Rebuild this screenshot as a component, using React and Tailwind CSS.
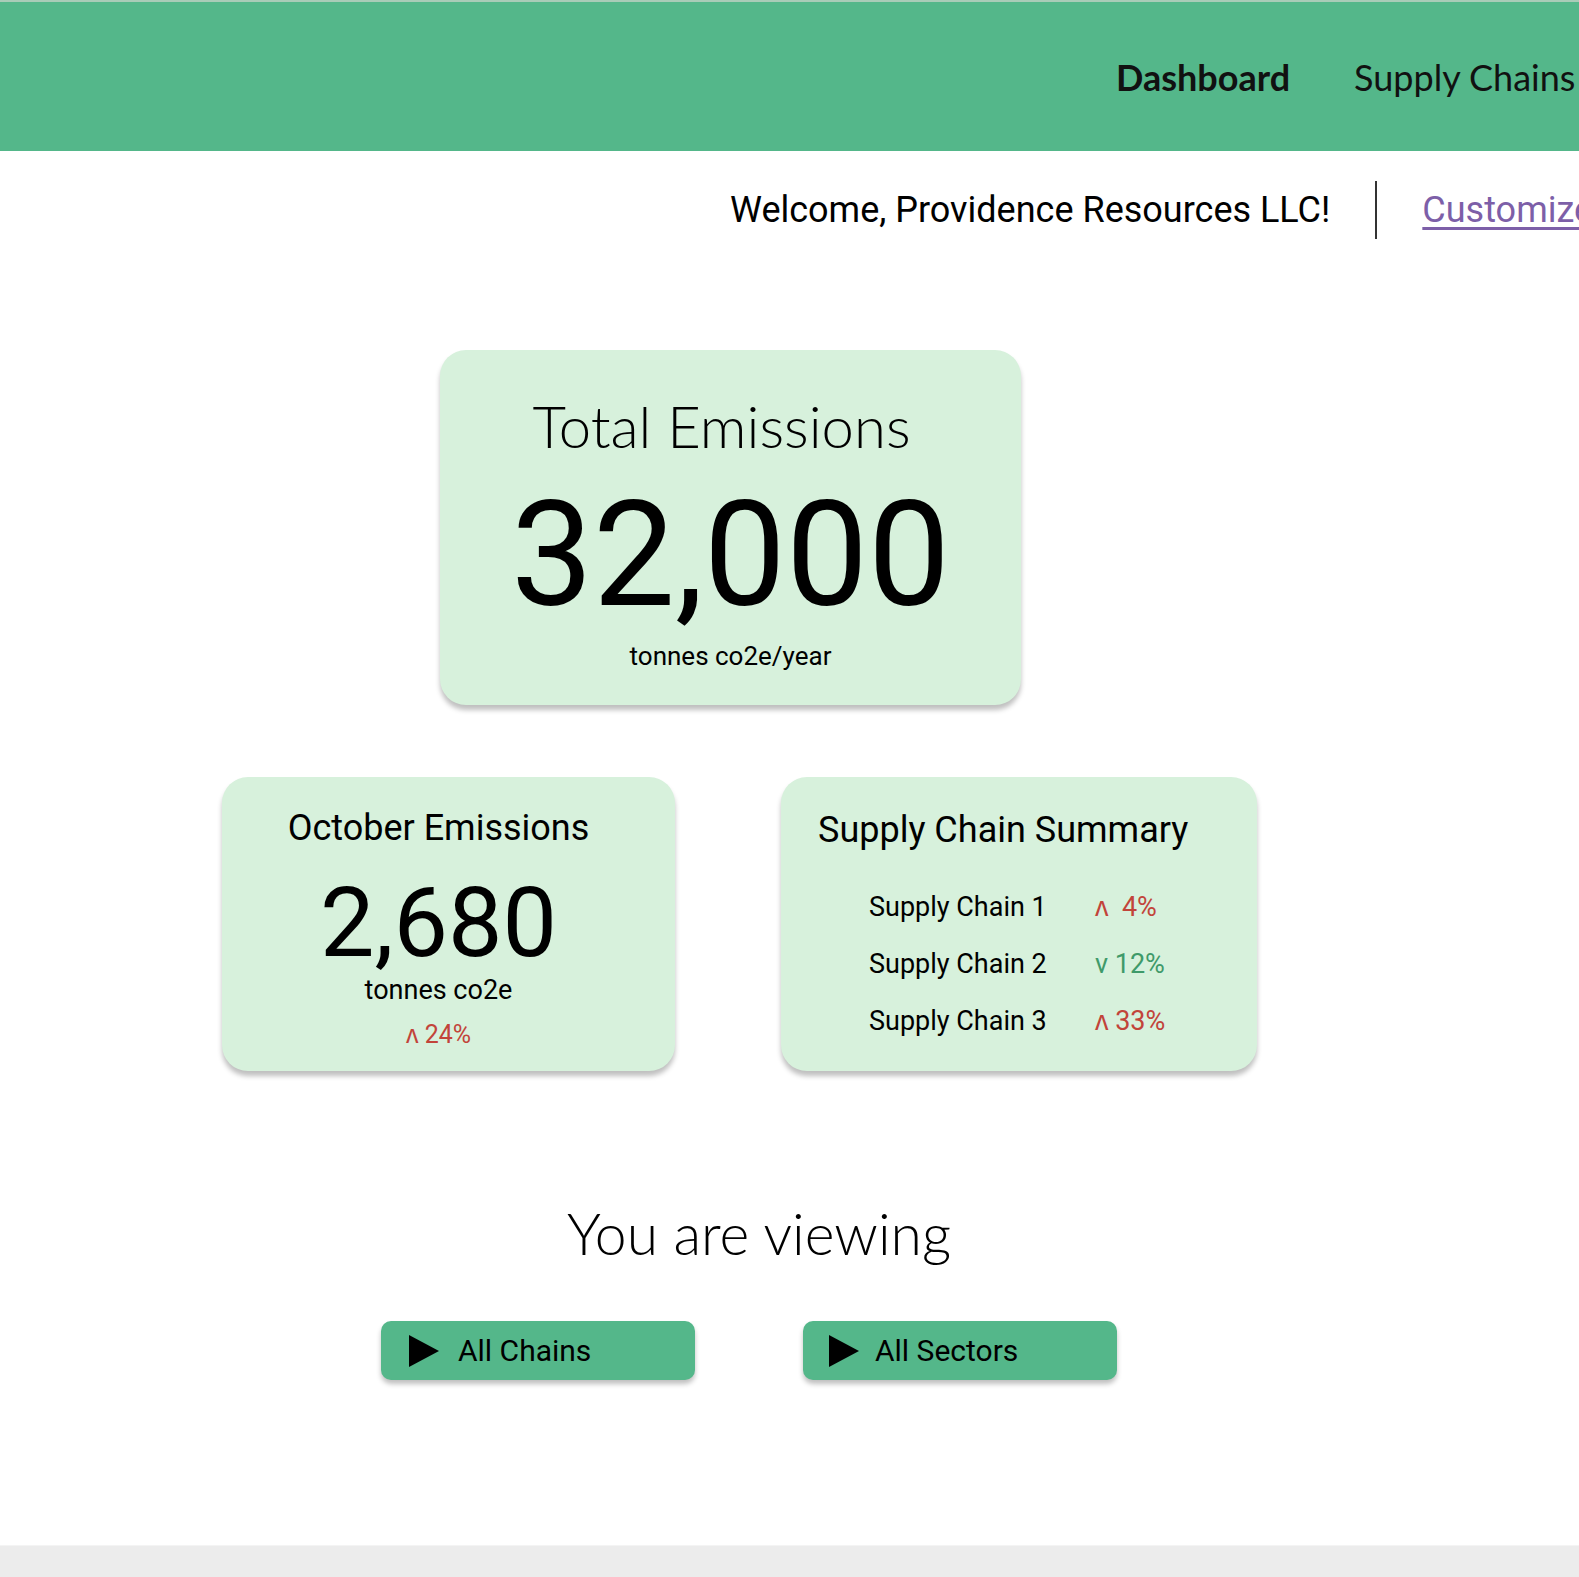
import React from 'react';

const roboto = { fontFamily: 'Roboto, "Liberation Sans", sans-serif' };

function Play() {
  return (
    <svg width="30" height="32" viewBox="0 0 30 32" className="shrink-0">
      <path d="M0 0 L30 16 L0 32 Z" fill="#000" />
    </svg>
  );
}

function ChainRow({ name, change, up }) {
  return (
    <div className="grid grid-cols-[226px_auto] items-center h-[57px]">
      <span className="text-[27px] text-black">{name}</span>
      <span className={`text-[27px] whitespace-pre ${up ? 'text-[#c2443a]' : 'text-[#3f9a6a]'}`}>{change}</span>
    </div>
  );
}

export default function App() {
  return (
    <div className="w-[1579px] h-[1577px] bg-white flex flex-col overflow-hidden" style={roboto}>
      {/* Top nav */}
      <header className="h-[151px] shrink-0 bg-[#54b78a] border-t-2 border-[#a9ccb8] flex items-center overflow-hidden whitespace-nowrap">
        <nav className="ml-[1116px] flex items-center gap-[64px] text-[36px] text-[#111]" style={{ fontFamily: 'Lato, sans-serif' }}>
          <span className="font-bold">Dashboard</span>
          <span>Supply Chains</span>
        </nav>
      </header>

      {/* Welcome bar */}
      <div className="h-[118px] shrink-0 flex items-center pl-[730px] whitespace-nowrap overflow-hidden">
        <span className="shrink-0 text-[36px] text-black">Welcome, Providence Resources LLC!</span>
        <span className="shrink-0 mx-[45px] w-[2px] h-[58px] bg-[#333]" />
        <a className="shrink-0 text-[36px] text-[#7d5fa8] underline underline-offset-[5px]">Customize</a>
      </div>

      {/* Total emissions */}
      <div className="pt-[81px] pl-[440px]">
        <div className="w-[581px] h-[355px] rounded-[26px] bg-[#d7f1dc] shadow-[0_5px_5px_rgba(0,0,0,0.25)] flex flex-col items-center pt-[47px]">
          <h2 className="text-[58px] leading-none font-light text-black -ml-[18px]" style={{ fontFamily: 'Lato, sans-serif' }}>Total Emissions</h2>
          <div className="text-[146px] leading-none mt-[28px] text-black">32,000</div>
          <div className="text-[26px] mt-[8px] text-black">tonnes co2e/year</div>
        </div>
      </div>

      {/* Monthly + summary */}
      <div className="pt-[72px] pl-[222px] flex gap-[106px]">
        <div className="w-[453px] h-[294px] rounded-[26px] bg-[#d7f1dc] shadow-[0_5px_5px_rgba(0,0,0,0.25)] flex flex-col items-center pt-[33px]">
          <h3 className="text-[36px] leading-none text-black -ml-[20px]">October Emissions</h3>
          <div className="text-[97px] leading-none mt-[29px] text-black -ml-[20px]">2,680</div>
          <div className="text-[27px] leading-none mt-[5px] text-black -ml-[20px]">tonnes co2e</div>
          <div className="text-[25px] leading-none mt-[18px] text-[#c2443a] -ml-[20px]">ʌ 24%</div>
        </div>
        <div className="w-[476px] h-[294px] rounded-[26px] bg-[#d7f1dc] shadow-[0_5px_5px_rgba(0,0,0,0.25)] flex flex-col pt-[35px] pl-[37px]">
          <h3 className="text-[36px] leading-none text-black">Supply Chain Summary</h3>
          <div className="mt-[31px] pl-[51px] flex flex-col">
            <ChainRow name="Supply Chain 1" change={'ʌ  4%'} up />
            <ChainRow name="Supply Chain 2" change="v 12%" />
            <ChainRow name="Supply Chain 3" change="ʌ 33%" up />
          </div>
        </div>
      </div>

      {/* Viewing */}
      <div className="pt-[134px] w-[1518px] text-center">
        <h2 className="text-[57px] leading-none font-light text-black" style={{ fontFamily: 'Lato, sans-serif' }}>You are viewing</h2>
      </div>
      <div className="pt-[59px] pl-[381px] flex gap-[108px]">
        <button className="w-[314px] h-[59px] rounded-[10px] bg-[#54b78a] shadow-[0_4px_5px_rgba(0,0,0,0.25)] flex items-center gap-[19px] pl-[28px] text-[30px] text-black">
          <Play />
          All Chains
        </button>
        <button className="w-[314px] h-[59px] rounded-[10px] bg-[#54b78a] shadow-[0_4px_5px_rgba(0,0,0,0.25)] flex items-center gap-[16px] pl-[26px] text-[30px] text-black">
          <Play />
          All Sectors
        </button>
      </div>

      <div className="flex-1" />
      <footer className="h-[32px] shrink-0 bg-[#ececec] border-t border-[#f4f4f4]" />
    </div>
  );
}
